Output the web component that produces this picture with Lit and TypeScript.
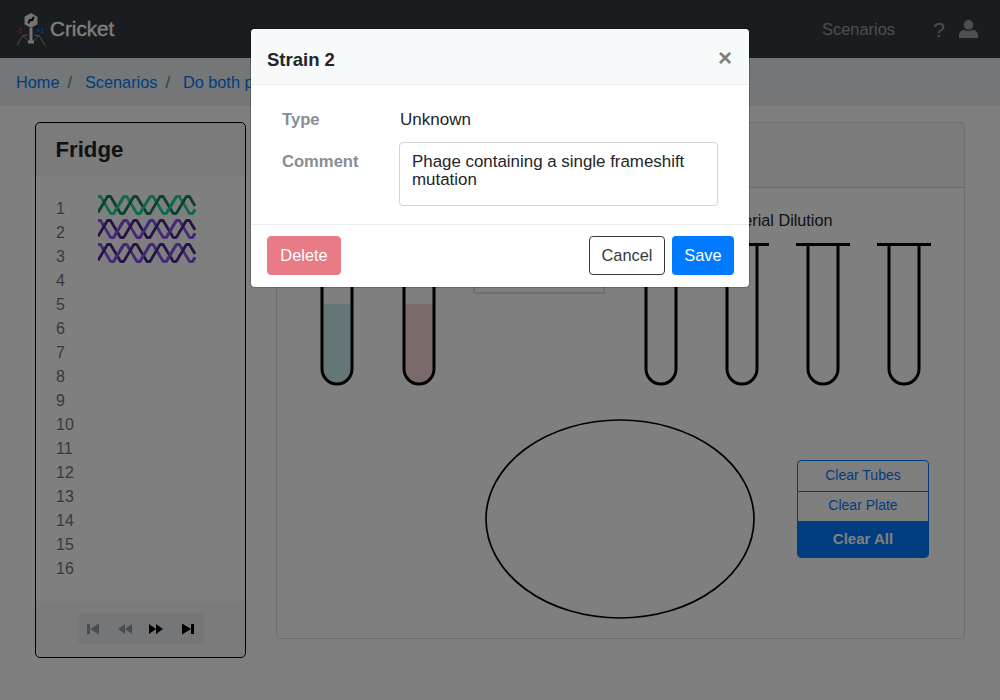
import { LitElement, html, css, svg } from "lit";
import { customElement } from "lit/decorators.js";

const PERIOD = 26.3;

function waveY(x: number, peak: number, h = 20) {
  const t = ((x - peak) / PERIOD) * Math.PI * 2;
  const tri = (Math.asin(Math.cos(t)) * 2) / Math.PI;
  const f = Math.max(-1, Math.min(1, 1.3 * tri));
  return h / 2 - (h / 2 - 1.5) * f;
}

function strand(peak: number, w = 97) {
  let d = "";
  for (let x = 0; x <= w; x += 0.5) {
    d += `${x === 0 ? "M" : "L"}${x} ${waveY(x, peak).toFixed(2)}`;
  }
  return d;
}

/* only the rising flanks of a strand, which pass over the other strand */
function rising(peak: number, w = 97) {
  let d = "";
  let open = false;
  for (let x = 0; x <= w; x += 0.5) {
    const up = waveY(x + 0.5, peak) < waveY(x, peak) - 0.01;
    if (up) {
      d += `${open ? "L" : "M"}${x} ${waveY(x, peak).toFixed(2)}`;
      open = true;
    } else {
      open = false;
    }
  }
  return d;
}

function helix(light: string, dark: string) {
  return html`<svg class="dna" width="98" height="20" viewBox="0 0 98 20">
    <path d=${strand(1)} fill="none" stroke=${light} stroke-width="2.800" stroke-linejoin="round"></path>
    <path d=${strand(11)} fill="none" stroke=${dark} stroke-width="2.800" stroke-linejoin="round"></path>
    <path d=${rising(1)} fill="none" stroke=${light} stroke-width="2.800"></path>
  </svg>`;
}

function tube(fill?: string) {
  return html`<svg class="tube" width="54" height="143" viewBox="0 0 54 143">
    ${fill ? svg`<path d="M12 61H42V126A15 15 0 0 1 12 126Z" fill=${fill}></path>` : ""}
    <path d="M0 1.5H54" stroke="#000" stroke-width="3" fill="none"></path>
    <path d="M12 1.5V126A15 15 0 0 0 42 126V1.5" stroke="#000" stroke-width="3" fill="none"></path>
  </svg>`;
}

@customElement("app-root")
export class AppRoot extends LitElement {
  static styles = css`
    :host { display: block; position: relative; width: 1000px; height: 700px; overflow: hidden; background: #fff; font-family: "Liberation Sans", Arial, sans-serif; font-size: 16px; color: #212529; }
    * { box-sizing: border-box; }
    .nav { height: 58px; background: #343a40; display: flex; align-items: center; padding: 0 22px 0 16px; }
    .brand { display: flex; align-items: center; gap: 4px; color: #fff; font-size: 20.700px; font-weight: 400; -webkit-text-stroke: 0.3px #fff; }
    .spacer { flex: 1; }
    .nav-link { color: rgba(255,255,255,.5); font-size: 16.4px; padding-top: 1px; }
    .help { color: rgba(255,255,255,.5); font-size: 21px; margin-left: 38px; width: 12px; text-align: center; padding-top: 1px; }
    .user { margin-left: 14px; display: block; }
    .crumbs { height: 48px; background: #e9ecef; display: flex; align-items: center; padding-left: 16px; white-space: nowrap; font-size: 16.3px; }
    .crumbs a { color: #007bff; }
    .crumbs span { color: #6c757d; margin: 0 13px 0 8px; }
    .main { display: flex; align-items: flex-start; gap: 30px; padding: 16px 0 0 35px; }
    .fridge { width: 211px; height: 536px; border: 1px solid #000; border-radius: 5px; display: flex; flex-direction: column; overflow: hidden; }
    .fridge-head { height: 53px; padding: 0 0 0 19.5px; display: flex; align-items: center; background: rgba(0,0,0,.03); font-size: 22.2px; font-weight: 700; }
    .rows { flex: 1; padding: 19px 0 0 20px; }
    .row { height: 24px; display: flex; color: #6c757d; line-height: 28px; }
    .num { width: 42px; }
    .dna { display: block; }
    .fridge-foot { height: 56px; background: rgba(0,0,0,.03); display: flex; justify-content: center; align-items: flex-start; padding-top: 12px; }
    .pager { display: flex; border-radius: 4px; overflow: hidden; }
    .pager button { width: 31.5px; height: 31px; padding: 0; border: 0; background: #e9ecef; display: flex; align-items: center; justify-content: center; }
    .pager svg { display: block; }
    .off svg { opacity: .35; }
    .lab { width: 689px; height: 517px; border: 1px solid rgba(0,0,0,.125); border-radius: 4px; display: flex; flex-direction: column; }
    .lab-head { height: 65px; background: rgba(0,0,0,.03); border-bottom: 1px solid rgba(0,0,0,.125); }
    .lab-body { flex: 1; padding: 22px 33px 0 33px; }
    .top { display: flex; }
    .group { display: flex; flex-direction: column; align-items: center; gap: 13px; }
    .group .title { height: 20px; line-height: 20px; font-size: 16.2px; }
    .right { margin-left: auto; }
    .tubes { display: flex; gap: 28px; }
    .right .tubes { gap: 27px; }
    .box { flex: none; width: 132px; height: 50px; margin: 34px 0 0 27px; border: 1px solid rgba(0,0,0,.125); border-width: 0 2px 2px; }
    .bottom { display: flex; align-items: flex-start; margin-top: 33px; padding-left: 175px; }
    .plate { display: block; }
    .clear { margin: 41px 0 0 42px; width: 132px; display: flex; flex-direction: column; border-radius: 4px; overflow: hidden; border: 1px solid #007bff; }
    .clear div { height: 30px; padding-bottom: 3px; display: flex; align-items: center; justify-content: center; color: #007bff; font-size: 14px; }
    .clear div + div { border-top: 1px solid #007bff; }
    .clear .all { height: 36px; padding-bottom: 1px; background: #007bff; color: #fff; font-weight: 700; font-size: 15px; border-top: 0; }
    .backdrop { position: absolute; inset: 0; background: rgba(0,0,0,.5); display: flex; justify-content: center; align-items: flex-start; padding-top: 28px; }
    .modal { width: 500px; height: 260px; background: #fff; border: 1px solid rgba(0,0,0,.2); background-clip: padding-box; border-radius: 5px; display: flex; flex-direction: column; overflow: hidden; }
    .m-head { height: 56px; flex: none; background: #f8f9fa; border-bottom: 1px solid #e9ecef; display: flex; align-items: center; justify-content: space-between; padding: 6px 17px 0 16px; }
    .m-title { font-size: 18.5px; font-weight: 700; color: #212529; }
    .close { font-size: 24px; font-weight: 700; color: #808080; line-height: 1; margin-top: -4px; }
    .m-body { flex: 1; padding: 22px 31px 0; display: grid; grid-template-columns: 117px 319px; grid-template-rows: 24px 64px; row-gap: 11px; align-content: start; font-size: 17px; }
    .label { color: #868e96; font-weight: 700; font-size: 16.6px; padding-top: 3px; }
    .label.c { padding-top: 10px; }
    .value { padding: 3px 0 0 1px; }
    textarea { width: 319px; height: 64px; border: 1px solid #ced4da; border-radius: 4px; padding: 10px 12px; font: 16.9px/18px "Liberation Sans", Arial, sans-serif; color: #212529; resize: none; outline: none; display: block; overflow: hidden; }
    .m-foot { height: 63px; flex: none; border-top: 1px solid #e9ecef; display: flex; align-items: flex-start; padding: 11px 15px 0 16px; gap: 7px; }
    .btn { height: 39px; padding: 0; border-radius: 4px; font: 16.4px "Liberation Sans", Arial, sans-serif; border: 1px solid transparent; }
    .del { background: #dc3545; border-color: #dc3545; color: #fff; opacity: .65; width: 74px; margin-right: auto; }
    .cancel { background: #fff; border-color: #343a40; color: #343a40; width: 76px; }
    .save { background: #007bff; color: #fff; width: 62px; }
  `;

  render() {
    const nums = Array.from({ length: 16 }, (_, i) => i + 1);
    return html`
      <div class="nav">
        <div class="brand">
          <svg width="30" height="34" viewBox="0 0 30 34">
            <path d="M15 1L21.5 4.700V12.300L15 16L8.500 12.300V4.700Z" fill="#e8e8e8"></path>
            <path d="M12 11C14 10 13 7 15 8S16 7 18 5" stroke="#111" stroke-width="2" fill="none"></path>
            <path d="M15 16V30" stroke="#e8e8e8" stroke-width="3"></path>
            <path d="M12 30H18" stroke="#e8e8e8" stroke-width="3"></path>
            <path d="M12 23L7 23.500L1 33M18 23L23 23.500L29 33M12.500 29L7 23.500M17.500 29L23 23.500" stroke="#bbb" stroke-width=".8" fill="none"></path>
            <text x="0" y="21" font-size="6.500" font-weight="700" fill="#dc3545" font-family="Liberation Sans">-1</text>
            <text x="21" y="21" font-size="6.500" font-weight="700" fill="#007bff" font-family="Liberation Sans">+1</text>
          </svg>
          <span>Cricket</span>
        </div>
        <div class="spacer"></div>
        <span class="nav-link">Scenarios</span>
        <span class="help">?</span>
        <svg class="user" width="19" height="18" viewBox="0 0 19 18">
          <circle cx="9.500" cy="4.800" r="4.800" fill="#9a9c9f"></circle>
          <path d="M0 18V15.500C0 12 2.500 10 5 10C7 11 12 11 14 10C16.500 10 19 12 19 15.500V18Z" fill="#9a9c9f"></path>
        </svg>
      </div>
      <div class="crumbs">
        <a>Home</a><span>/</span><a>Scenarios</a><span>/</span><a>Do both phages</a>
      </div>
      <div class="main">
        <div class="fridge">
          <div class="fridge-head">Fridge</div>
          <div class="rows">
            ${nums.map(
              (n) => html`<div class="row"><div class="num">${n}</div>
                ${n === 1 ? helix("#22d49c", "#128060") : n <= 3 ? helix("#8a50f0", "#482a90") : ""}</div>`
            )}
          </div>
          <div class="fridge-foot">
            <div class="pager">
              <button class="off"><svg width="14" height="12" viewBox="0 0 14 12"><path d="M1 1H4V11H1ZM4 6L13 .5V11.500Z" fill="#000"></path></svg></button>
              <button class="off"><svg width="14" height="10" viewBox="0 0 14 10"><path d="M7 0V10L0 5ZM14 0V10L7 5Z" fill="#000"></path></svg></button>
              <button><svg width="14" height="10" viewBox="0 0 14 10"><path d="M0 0L7 5L0 10ZM7 0L14 5L7 10Z" fill="#000"></path></svg></button>
              <button><svg width="14" height="12" viewBox="0 0 14 12"><path d="M13 1H10V11H13ZM10 6L1 .5V11.500Z" fill="#000"></path></svg></button>
            </div>
          </div>
        </div>
        <div class="lab">
          <div class="lab-head"></div>
          <div class="lab-body">
            <div class="top">
              <div class="group">
                <div class="title"></div>
                <div class="tubes">${tube("#c8ecea")}${tube("#f4d4d4")}</div>
              </div>
              <div class="box"></div>
              <div class="group right">
                <div class="title">Serial Dilution</div>
                <div class="tubes">${tube()}${tube()}${tube()}${tube()}</div>
              </div>
            </div>
            <div class="bottom">
              <svg class="plate" width="270" height="200" viewBox="0 0 270 200"><ellipse cx="135" cy="100" rx="134" ry="99" fill="none" stroke="#000" stroke-width="1.700"></ellipse></svg>
              <div class="clear">
                <div>Clear Tubes</div>
                <div>Clear Plate</div>
                <div class="all">Clear All</div>
              </div>
            </div>
          </div>
        </div>
      </div>
      <div class="backdrop">
        <div class="modal">
          <div class="m-head"><span class="m-title">Strain 2</span><span class="close">×</span></div>
          <div class="m-body">
            <div class="label">Type</div>
            <div class="value">Unknown</div>
            <div class="label c">Comment</div>
            <textarea .value=${"Phage containing a single frameshift mutation"}></textarea>
          </div>
          <div class="m-foot">
            <button class="btn del">Delete</button>
            <button class="btn cancel">Cancel</button>
            <button class="btn save">Save</button>
          </div>
        </div>
      </div>
    `;
  }
}
